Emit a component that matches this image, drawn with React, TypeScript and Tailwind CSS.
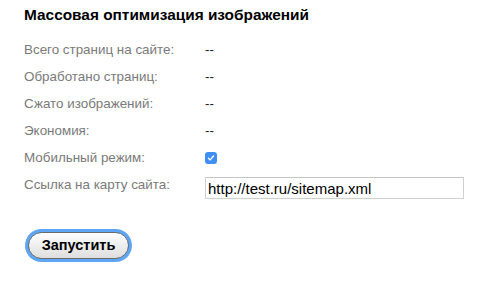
import React, { useState } from 'react';

const rows: { label: string; value: string }[] = [
  { label: 'Всего страниц на сайте:', value: '--' },
  { label: 'Обработано страниц:', value: '--' },
  { label: 'Сжато изображений:', value: '--' },
  { label: 'Экономия:', value: '--' },
];

export default function App() {
  const [mobile, setMobile] = useState(true);
  const [url, setUrl] = useState('http://test.ru/sitemap.xml');

  return (
    <div
      className="w-[480px] h-[303px] bg-white pl-[24px] pt-[5px]"
      style={{ fontFamily: '"Liberation Sans", Arial, sans-serif' }}
    >
      <h2 className="text-[15.4px] leading-[20px] font-bold text-black">
        Массовая оптимизация изображений
      </h2>

      <div className="mt-[11px] flex flex-col">
        {rows.map((r) => (
          <div key={r.label} className="flex h-[27px] items-center text-[13.4px] leading-[27px]">
            <div className="w-[181px] text-[#7a7a7a]">{r.label}</div>
            <div className="text-[#222]">{r.value}</div>
          </div>
        ))}

        {/* Mobile mode */}
        <div className="flex h-[27px] items-center text-[13.4px] leading-[27px]">
          <div className="w-[181px] text-[#7a7a7a]">Мобильный режим:</div>
          <button
            type="button"
            onClick={() => setMobile(!mobile)}
            className={`flex h-[12px] w-[12px] items-center justify-center rounded-[3px] ${
              mobile ? 'bg-[#3f8ef5]' : 'border border-[#aaa] bg-white'
            }`}
          >
            {mobile && (
              <svg viewBox="0 0 12 12" className="h-[10px] w-[10px]">
                <path d="M3 6.3 L5 8.3 L9 3.6" fill="none" stroke="white" strokeWidth="1.6" strokeLinecap="round" strokeLinejoin="round" />
              </svg>
            )}
          </button>
        </div>

        {/* Sitemap link */}
        <div className="flex h-[28px] text-[13.4px] leading-[27px]">
          <div className="w-[181px] text-[#7a7a7a]">Ссылка на карту сайта:</div>
          <input
            value={url}
            onChange={(e) => setUrl(e.target.value)}
            className="mt-[6px] h-[22px] w-[259px] border border-[#d0d0d0] border-t-[#c4c4c4] px-[2px] text-[15px] leading-[20px] text-black outline-none"
          />
        </div>
      </div>

      <div className="mt-[30px] ml-[1px]">
        <button
          type="button"
          className="h-[33px] w-[107px] rounded-full bg-[#5ea6f5] p-[3px]"
        >
          <span className="flex h-full w-full items-center justify-center rounded-full border border-[#6b6b6b] bg-gradient-to-b from-white to-[#dedede] text-[14.5px] font-bold text-black">
            Запустить
          </span>
        </button>
      </div>
    </div>
  );
}
